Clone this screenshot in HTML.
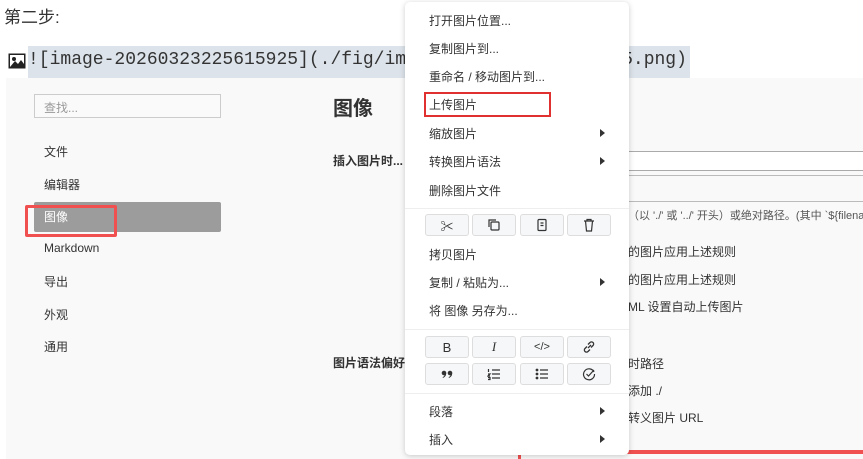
<!DOCTYPE html>
<html><head><meta charset="utf-8"><style>
*{margin:0;padding:0;box-sizing:border-box}
body{width:863px;height:459px;overflow:hidden;background:#fff;position:relative;font-family:"Liberation Sans","Noto Sans CJK SC",sans-serif;color:#333}
.a{position:absolute;white-space:nowrap}
.shot{position:absolute;left:6px;top:78px;width:857px;height:381px;background:#f9f9f9}
.nav{font-size:12px;color:#333}
.menu{position:absolute;left:405px;top:2px;width:224px;height:453px;background:#fff;border-radius:5px;box-shadow:0 1px 6px rgba(0,0,0,.2)}
.mi{position:absolute;left:24px;font-size:12px;color:#333}
.arr{position:absolute;left:195px;width:0;height:0;border-left:5px solid #333;border-top:4px solid transparent;border-bottom:4px solid transparent}
.sep{position:absolute;left:0;width:224px;height:1px;background:#eee}
.btn{position:absolute;width:44px;height:22px;border:1px solid #ddd;border-radius:3px;background:#f6f7f8;display:flex;align-items:center;justify-content:center;font-size:13px;color:#333}
.r{font-size:12px;color:#333}
</style></head><body>
<div class="a" style="left:4px;top:3px;font-size:17px;color:#333">第二步:</div>
<div class="a" style="left:28px;top:46px;width:662px;height:32px;background:#dce3ea"></div>
<svg class="a" style="left:8px;top:53px" width="18" height="16"><rect x="0.5" y="0.5" width="17" height="15" fill="#222"/><rect x="2" y="2" width="14" height="12" fill="#fff"/><circle cx="6" cy="6" r="2" fill="#222"/><path d="M2 14 L7 8 L10 11 L13 7 L16 11 L16 14Z" fill="#222"/></svg>
<div class="a" style="left:28px;top:46px;font-family:'Liberation Mono',monospace;font-size:18px;line-height:28px;color:#333">![image-20260323225615925](./fig/image-20260323225615925.png)</div>
<div class="shot"></div>
<div class="a" style="left:34px;top:94px;width:187px;height:24px;border:1px solid #ccc;background:#fafafa;font-size:12px;color:#999;padding:4px 9px">查找...</div>
<div class="a nav" style="left:44px;top:143px">文件</div>
<div class="a nav" style="left:44px;top:176px">编辑器</div>
<div class="a" style="left:34px;top:202px;width:187px;height:30px;background:#9c9c9c;border-radius:2px"></div>
<div class="a nav" style="left:44px;top:208px;color:#fff">图像</div>
<div class="a" style="left:25px;top:205px;width:92px;height:32px;border:3px solid #f05050;border-radius:2px"></div>
<div class="a nav" style="left:44px;top:241px">Markdown</div>
<div class="a nav" style="left:44px;top:273px">导出</div>
<div class="a nav" style="left:44px;top:306px">外观</div>
<div class="a nav" style="left:44px;top:338px">通用</div>
<div class="a" style="left:333px;top:92px;font-size:20px;font-weight:bold;color:#333">图像</div>
<div class="a" style="left:333px;top:152px;font-size:12px;font-weight:bold">插入图片时...</div>
<div class="a" style="left:333px;top:354px;font-size:12px;font-weight:bold">图片语法偏好</div>
<div class="a" style="left:628px;top:151px;width:235px;height:20px;border-top:1px solid #aaa;border-bottom:1px solid #aaa;background:#fff"></div>
<div class="a" style="left:628px;top:175px;width:235px;height:27px;border-top:1px solid #bbb;border-bottom:1px solid #bbb"></div>
<div class="a" style="left:628px;top:207px;font-size:11px;color:#555">（以 './' 或 '../' 开头）或绝对路径。(其中 `${filena</div>
<div class="a r" style="left:628px;top:243px">的图片应用上述规则</div>
<div class="a r" style="left:628px;top:271px">的图片应用上述规则</div>
<div class="a r" style="left:628px;top:298px">ML 设置自动上传图片</div>
<div class="a r" style="left:628px;top:355px">时路径</div>
<div class="a r" style="left:628px;top:382px">添加 ./</div>
<div class="a r" style="left:628px;top:409px">转义图片 URL</div>
<div class="a" style="left:518px;top:450px;width:345px;height:4px;background:#f05050"></div>
<div class="a" style="left:518px;top:450px;width:3px;height:9px;background:#f05050"></div>
<div class="menu">
<div class="mi" style="top:10px">打开图片位置...</div>
<div class="mi" style="top:38px">复制图片到...</div>
<div class="mi" style="top:66px">重命名 / 移动图片到...</div>
<div class="mi" style="top:94px">上传图片</div>
<div class="a" style="left:19px;top:90px;width:127px;height:25px;border:2px solid #e03030"></div>
<div class="mi" style="top:123px">缩放图片</div><div class="arr" style="top:127px"></div>
<div class="mi" style="top:151px">转换图片语法</div><div class="arr" style="top:155px"></div>
<div class="mi" style="top:180px">删除图片文件</div>
<div class="sep" style="top:206px"></div>
<div class="btn" style="left:20px;top:212px">✂</div>
<div class="btn" style="left:67px;top:212px"><svg width="14" height="14" fill="none" stroke="#333" stroke-width="1.2"><rect x="4" y="4" width="8" height="8" rx="1"/><path d="M2 9V2h7"/></svg></div>
<div class="btn" style="left:115px;top:212px"><svg width="14" height="14" fill="none" stroke="#333" stroke-width="1.2"><rect x="3" y="1.5" width="8" height="11" rx="1"/><path d="M5.5 5h3M5.5 7.5h3"/></svg></div>
<div class="btn" style="left:162px;top:212px"><svg width="14" height="14" fill="none" stroke="#333" stroke-width="1.2"><path d="M2 3h10M5 3V1.5h4V3M3.5 3l1 10h5l1-10"/></svg></div>
<div class="mi" style="top:244px">拷贝图片</div>
<div class="mi" style="top:272px">复制 / 粘贴为...</div><div class="arr" style="top:276px"></div>
<div class="mi" style="top:300px">将 图像 另存为...</div>
<div class="sep" style="top:327px"></div>
<div class="btn" style="left:20px;top:334px">B</div>
<div class="btn" style="left:67px;top:334px;font-family:'Liberation Serif',serif;font-style:italic">I</div>
<div class="btn" style="left:115px;top:334px;font-size:11px">&lt;/&gt;</div>
<div class="btn" style="left:162px;top:334px"><svg width="14" height="14" fill="none" stroke="#333" stroke-width="1.3"><path d="M6 8l3-3M5 6.5l-2 2a2 2 0 003 3l2-2M9 7.5l2-2a2 2 0 00-3-3l-2 2"/></svg></div>
<div class="btn" style="left:20px;top:361px"><svg width="14" height="14" fill="#333"><circle cx="4" cy="6" r="2.3"/><circle cx="10" cy="6" r="2.3"/><path d="M6.2 6.5q0 3-3.2 4.5l-.4-.7q1.8-1 2.2-3zM12.2 6.5q0 3-3.2 4.5l-.4-.7q1.8-1 2.2-3z"/></svg></div>
<div class="btn" style="left:67px;top:361px"><svg width="14" height="14" fill="none" stroke="#333" stroke-width="1.2"><path d="M5 3h8M5 7h8M5 11h8M1.5 2v3M1 7h2l-2 2h2M1 10.5h2v2H1"/></svg></div>
<div class="btn" style="left:115px;top:361px"><svg width="14" height="14" fill="none" stroke="#333" stroke-width="1.2"><path d="M5 3h8M5 7h8M5 11h8"/><circle cx="2" cy="3" r=".8" fill="#333"/><circle cx="2" cy="7" r=".8" fill="#333"/><circle cx="2" cy="11" r=".8" fill="#333"/></svg></div>
<div class="btn" style="left:162px;top:361px"><svg width="14" height="14" fill="none" stroke="#333" stroke-width="1.2"><path d="M12 5A5.5 5.5 0 1 0 12.5 7"/><path d="M4.5 7l2 2L12 3"/></svg></div>
<div class="sep" style="top:391px"></div>
<div class="mi" style="top:401px">段落</div><div class="arr" style="top:405px"></div>
<div class="mi" style="top:429px">插入</div><div class="arr" style="top:433px"></div>
</div>
</body></html>
